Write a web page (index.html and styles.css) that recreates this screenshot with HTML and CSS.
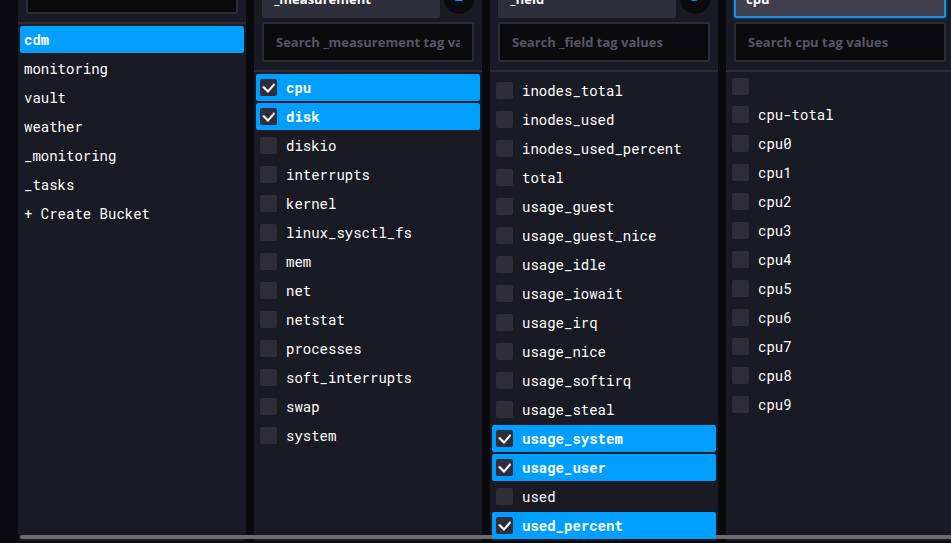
FILE: index.html
```html
<!DOCTYPE html>
<html lang="en">
<head>
<meta charset="utf-8">
<title>Query Builder</title>
<link rel="stylesheet" href="styles.css">
</head>
<body>
<main class="board">
  <section class="card">
    <div class="card-header">
      <input class="search" type="search" aria-label="Search buckets">
    </div>
    <div class="list">
      <button class="row selected">cdm</button>
      <button class="row">monitoring</button>
      <button class="row">vault</button>
      <button class="row">weather</button>
      <button class="row">_monitoring</button>
      <button class="row">_tasks</button>
      <button class="row">+ Create Bucket</button>
    </div>
  </section>

  <section class="card">
    <div class="card-header tagged">
      <div class="tag-line">
        <select class="tag" aria-label="Tag key"><option>_measurement</option></select>
        <span class="badge">2</span>
      </div>
      <input class="search" type="text" aria-label="Search _measurement" placeholder="Search _measurement tag values">
    </div>
    <div class="list">
      <label class="row selected"><input type="checkbox" checked>cpu</label>
      <label class="row selected"><input type="checkbox" checked>disk</label>
      <label class="row"><input type="checkbox">diskio</label>
      <label class="row"><input type="checkbox">interrupts</label>
      <label class="row"><input type="checkbox">kernel</label>
      <label class="row"><input type="checkbox">linux_sysctl_fs</label>
      <label class="row"><input type="checkbox">mem</label>
      <label class="row"><input type="checkbox">net</label>
      <label class="row"><input type="checkbox">netstat</label>
      <label class="row"><input type="checkbox">processes</label>
      <label class="row"><input type="checkbox">soft_interrupts</label>
      <label class="row"><input type="checkbox">swap</label>
      <label class="row"><input type="checkbox">system</label>
    </div>
  </section>

  <section class="card">
    <div class="card-header tagged">
      <div class="tag-line">
        <select class="tag" aria-label="Tag key"><option>_field</option></select>
        <span class="badge">3</span>
      </div>
      <input class="search" type="text" aria-label="Search _field" placeholder="Search _field tag values">
    </div>
    <div class="list scrolled">
      <label class="row"><input type="checkbox">inodes_total</label>
      <label class="row"><input type="checkbox">inodes_used</label>
      <label class="row"><input type="checkbox">inodes_used_percent</label>
      <label class="row"><input type="checkbox">total</label>
      <label class="row"><input type="checkbox">usage_guest</label>
      <label class="row"><input type="checkbox">usage_guest_nice</label>
      <label class="row"><input type="checkbox">usage_idle</label>
      <label class="row"><input type="checkbox">usage_iowait</label>
      <label class="row"><input type="checkbox">usage_irq</label>
      <label class="row"><input type="checkbox">usage_nice</label>
      <label class="row"><input type="checkbox">usage_softirq</label>
      <label class="row"><input type="checkbox">usage_steal</label>
      <label class="row selected"><input type="checkbox" checked>usage_system</label>
      <label class="row selected"><input type="checkbox" checked>usage_user</label>
      <label class="row"><input type="checkbox">used</label>
      <label class="row selected"><input type="checkbox" checked>used_percent</label>
    </div>
  </section>

  <section class="card">
    <div class="card-header tagged">
      <div class="tag-line">
        <select class="tag active" aria-label="Tag key"><option>cpu</option></select>
      </div>
      <input class="search" type="text" aria-label="Search cpu" placeholder="Search cpu tag values">
    </div>
    <div class="list">
      <label class="row blank"><input type="checkbox" aria-label="No value"></label>
      <label class="row"><input type="checkbox">cpu-total</label>
      <label class="row"><input type="checkbox">cpu0</label>
      <label class="row"><input type="checkbox">cpu1</label>
      <label class="row"><input type="checkbox">cpu2</label>
      <label class="row"><input type="checkbox">cpu3</label>
      <label class="row"><input type="checkbox">cpu4</label>
      <label class="row"><input type="checkbox">cpu5</label>
      <label class="row"><input type="checkbox">cpu6</label>
      <label class="row"><input type="checkbox">cpu7</label>
      <label class="row"><input type="checkbox">cpu8</label>
      <label class="row"><input type="checkbox">cpu9</label>
    </div>
  </section>
  <div class="scroll-thumb"></div>
</main>
</body>
</html>
```
FILE: styles.css
```css
* {
  box-sizing: border-box;
}

body {
  margin: 0;
  height: 100vh;
  overflow: hidden;
  display: flex;
  background: #0b0b0f;
  color: #fff;
  font-family: "Open Sans", sans-serif;
}

/* The board is scrolled up slightly under the window edge. */
.board {
  position: relative;
  flex: 1;
  min-width: 0;
  display: flex;
  gap: 8px;
  margin-top: -34px;
  padding: 0 0 2px 18px;
}

.card {
  flex: 1 0 228px;
  display: flex;
  flex-direction: column;
  border-radius: 4px;
  background: #1a1a24;
}

.card-header {
  display: flex;
  flex-direction: column;
  gap: 4px;
  padding: 8px;
  border-bottom: 2px solid #2c2b39;
}

.tagged {
  padding-top: 14px;
}

.tag-line {
  display: flex;
  align-items: center;
  gap: 4px;
}

.tag {
  appearance: none;
  flex: 1;
  min-width: 0;
  height: 38px;
  padding: 0 12px;
  border: 0;
  border-radius: 2px;
  background: #2f2e3c;
  color: #fff;
  font: 700 13px/20px "Open Sans", sans-serif;
}

.tag.active {
  padding: 0 10px;
  border: 2px solid #1c90d8;
  background: #403f4d;
  box-shadow: 0 0 3px #0079c4;
}

.badge {
  width: 30px;
  height: 30px;
  border-radius: 50%;
  background: #0b0b0f;
  color: #009fff;
  font: 700 14px/24px "Open Sans", sans-serif;
  text-align: center;
}

.search {
  appearance: none;
  width: 100%;
  height: 40px;
  padding: 0 12px;
  border: 2px solid #2c2b39;
  border-radius: 2px;
  background: #0b0b0f;
  color: #fff;
  font: 700 13px/20px "Open Sans", sans-serif;
}

.search::placeholder {
  color: #575666;
  opacity: 1;
}

.list {
  display: flex;
  flex-direction: column;
  gap: 2px;
  padding: 2px;
}

.scrolled {
  padding-top: 5px;
}

.row {
  display: flex;
  align-items: center;
  gap: 9px;
  height: 27px;
  padding: 0 4px;
  border: 0;
  border-radius: 2px;
  background: transparent;
  color: #fff;
  font: 400 14px/20px "Roboto Mono", "DejaVu Sans Mono", monospace;
  text-align: left;
  white-space: nowrap;
}

.blank {
  height: 25px;
}

.selected {
  position: relative;
  z-index: 2;
  background: #009fff;
  font-weight: 700;
}

.row input {
  appearance: none;
  flex: none;
  display: block;
  width: 17px;
  height: 17px;
  margin: 0;
  border-radius: 2px;
  background: #2e2d39;
}

.row input:checked {
  background: #2f2e3c;
}

.row input:checked::after {
  content: "";
  display: block;
  width: 17px;
  height: 17px;
  background: #fff;
  clip-path: polygon(2px 8px, 4px 7px, 8px 11px, 14px 4px, 15px 6px, 8px 14px);
}

.scroll-thumb {
  position: absolute;
  z-index: 1;
  left: 20px;
  right: 0;
  bottom: 4px;
  height: 4px;
  border-radius: 2px 0 0 2px;
  background: #6c6b73;
}
```
